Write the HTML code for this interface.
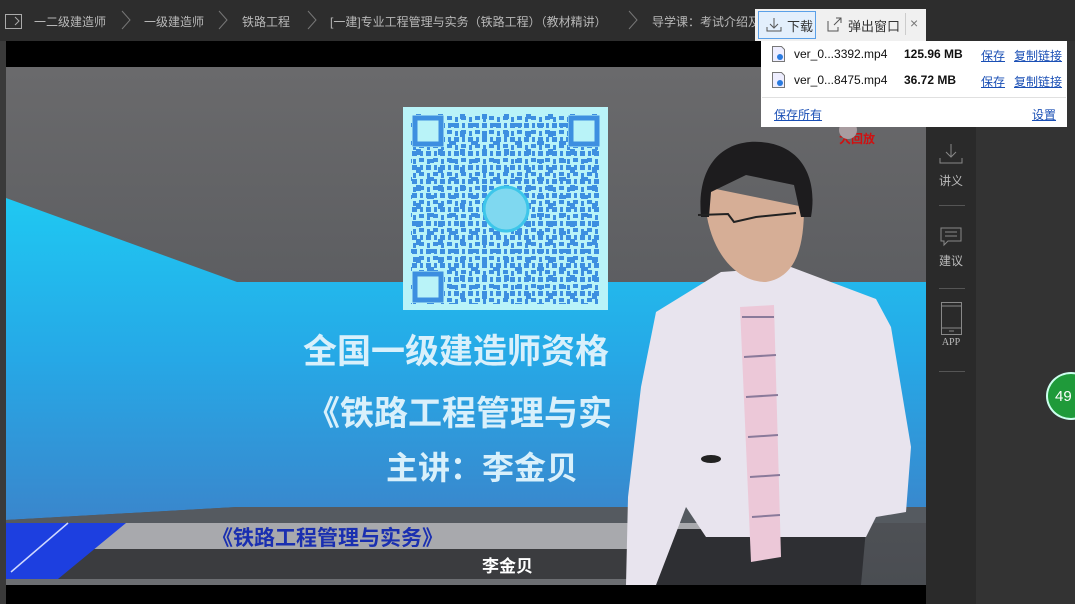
<!DOCTYPE html>
<html><head><meta charset="utf-8"><style>
*{margin:0;padding:0;box-sizing:border-box}
body{width:1075px;height:604px;overflow:hidden;background:#2b2b2b;font-family:"Liberation Sans","Noto Sans CJK SC",sans-serif;position:relative}
.abs{position:absolute}
.bc{position:absolute;top:13px;color:#b8b8b8;font-size:12px;white-space:nowrap}
.chev{position:absolute;top:10px;width:10px;height:20px}
.side{color:#bbb;font-size:12px;text-align:center;width:50px;position:absolute;left:926px}
.hr{position:absolute;left:939px;width:26px;height:1px;background:#555}
a{color:#1a4fb5;text-decoration:underline}
</style></head><body>
<div class="abs" style="left:0;top:0;width:1075px;height:41px;background:#2d2d2d"></div>
<svg class="abs" style="left:5px;top:14px" width="18" height="16"><rect x="0.5" y="0.5" width="16" height="14" fill="none" stroke="#aaa"/><path d="M10 3l4 4-4 4" stroke="#aaa" fill="none"/></svg>
<div class="bc" style="left:34px">一二级建造师</div>
<svg class="chev" style="left:121px"><path d="M1 1l8 9-8 9" stroke="#777" fill="none"/></svg>
<div class="bc" style="left:144px">一级建造师</div>
<svg class="chev" style="left:218px"><path d="M1 1l8 9-8 9" stroke="#777" fill="none"/></svg>
<div class="bc" style="left:242px">铁路工程</div>
<svg class="chev" style="left:307px"><path d="M1 1l8 9-8 9" stroke="#777" fill="none"/></svg>
<div class="bc" style="left:330px">[一建]专业工程管理与实务（铁路工程）（教材精讲）</div>
<svg class="chev" style="left:628px"><path d="M1 1l8 9-8 9" stroke="#777" fill="none"/></svg>
<div class="bc" style="left:652px;width:105px;overflow:hidden">导学课：考试介绍及</div>

<div class="abs" style="left:6px;top:41px;width:920px;height:563px;background:#000"></div>
<div class="abs" style="left:6px;top:67px;width:920px;height:518px;overflow:hidden">
 <svg width="920" height="518" class="abs" style="left:0;top:0">
  <defs>
   <linearGradient id="bg" x1="0" y1="0" x2="0" y2="1"><stop offset="0" stop-color="#6a6a6c"/><stop offset="1" stop-color="#4a4d52"/></linearGradient>
   <linearGradient id="bl" x1="0" y1="0" x2="0" y2="1"><stop offset="0" stop-color="#1fc8f2"/><stop offset="0.5" stop-color="#26a8e6"/><stop offset="1" stop-color="#3a86cc"/></linearGradient>
   <pattern id="qr" width="14" height="14" patternUnits="userSpaceOnUse"><rect width="5" height="5" fill="#3d8fe0"/><rect x="7" y="7" width="5" height="4" fill="#3d8fe0"/><rect x="8" y="0" width="3" height="5" fill="#3d8fe0"/><rect x="1" y="8" width="3" height="5" fill="#3d8fe0"/></pattern>
   <pattern id="qr2" width="22" height="18" patternUnits="userSpaceOnUse"><rect x="3" y="2" width="7" height="4" fill="#3d8fe0"/><rect x="14" y="10" width="5" height="6" fill="#3d8fe0"/></pattern>
  </defs>
  <rect width="920" height="518" fill="url(#bg)"/>
  <polygon points="0,131 231,215 920,215 920,440 231,440 0,453" fill="url(#bl)"/>
  <polygon points="0,453 231,440 920,440 920,456 0,456" fill="#555a60"/>
  <!-- QR -->
  <rect x="397" y="40" width="205" height="203" fill="#b9f3f8"/>
  <rect x="405" y="47" width="190" height="190" fill="url(#qr)"/>
  <rect x="405" y="47" width="190" height="190" fill="url(#qr2)"/>
  <rect x="406" y="48" width="32" height="32" fill="#b9f3f8"/><rect x="562" y="48" width="32" height="32" fill="#b9f3f8"/><rect x="406" y="204" width="32" height="32" fill="#b9f3f8"/>
  <rect x="409" y="51" width="26" height="26" fill="none" stroke="#3d8fe0" stroke-width="5"/>
  <rect x="565" y="51" width="26" height="26" fill="none" stroke="#3d8fe0" stroke-width="5"/>
  <rect x="409" y="207" width="26" height="26" fill="none" stroke="#3d8fe0" stroke-width="5"/>
  <circle cx="500" cy="142" r="22" fill="#7fd8f0" stroke="#3dc6ea" stroke-width="3"/>
  <text x="297" y="296" font-size="34" font-weight="bold" fill="#d9f0fb" font-family="Noto Sans CJK SC">全国一级建造师资格</text>
  <text x="300" y="358" font-size="34" font-weight="bold" fill="#d9f0fb" font-family="Noto Sans CJK SC">《铁路工程管理与实</text>
  <text x="380" y="412" font-size="32" font-weight="bold" fill="#d9f0fb" font-family="Noto Sans CJK SC">主讲：李金贝</text>
  <!-- lower third -->
  <rect x="0" y="456" width="720" height="26" fill="#a8a9ad"/>
  <rect x="0" y="482" width="720" height="30" fill="#3b3c3f"/>
  <rect x="0" y="512" width="720" height="6" fill="#6c6e72"/>
  <polygon points="0,456 120,456 52,512 0,512" fill="#1d3fe0"/>
  <line x1="62" y1="456" x2="5" y2="505" stroke="#cfd8ff" stroke-width="1.5"/>
  <text x="206" y="478" font-size="21" font-weight="bold" fill="#1a2fb0" font-family="Noto Sans CJK SC">《铁路工程管理与实务》</text>
  <text x="476" y="505" font-size="17" font-weight="bold" fill="#fff" font-family="Noto Sans CJK SC">李金贝</text>
  <!-- person -->
  <path d="M640 462 L860 462 L855 518 L645 518 Z" fill="#2e2f33"/>
  <path d="M715 205 L785 200 L870 232 L885 260 L905 380 L900 445 L870 450 L860 470 L700 470 L680 440 L650 518 L620 518 L622 430 L635 320 L650 245 Z" fill="#e8e4ee"/>
  <path d="M734 240 L768 238 L775 490 L745 495 Z" fill="#ecc8d8"/>
  <path d="M736 250 L768 250 M738 290 L770 288 M740 330 L772 328 M742 370 L772 368 M744 410 L774 408 M746 450 L774 448" stroke="#8a7a9a" stroke-width="2"/>
  <path d="M700 143 C 705 185 730 215 760 215 C 790 210 798 180 798 140 L700 120 Z" fill="#d6ae96"/>
  <path d="M695 150 C 690 95 720 72 755 75 C 795 78 812 110 805 150 L795 150 L788 118 L740 108 L705 125 L703 150 Z" fill="#1d1c1e"/>
  <path d="M692 148 L722 147 L728 155 L750 150 L790 146" stroke="#222" stroke-width="2" fill="none"/>
  <ellipse cx="705" cy="392" rx="10" ry="4" fill="#222"/>
  <text x="833" y="76" font-size="12" font-weight="bold" fill="#d01010">大回放</text>
  <circle cx="842" cy="63" r="9" fill="#a89ca0"/>
 </svg>
</div>
<div class="abs" style="left:0;top:41px;width:6px;height:563px;background:#3a3a3a"></div>

<div class="abs" style="left:926px;top:41px;width:50px;height:563px;background:#2a2a2a"></div>
<div class="abs" style="left:976px;top:41px;width:99px;height:563px;background:#333"></div>
<svg class="abs" style="left:939px;top:143px" width="24" height="22"><path d="M12 1v13M7 9l5 5 5-5M1 15v5h22v-5" stroke="#888" fill="none"/></svg>
<div class="side" style="top:172px">讲义</div>
<div class="hr" style="top:205px"></div>
<svg class="abs" style="left:940px;top:227px" width="22" height="20"><path d="M1 1h20v13H8l-4 4v-4H1z" stroke="#888" fill="none"/><path d="M5 5h12M5 9h12" stroke="#888"/></svg>
<div class="side" style="top:252px">建议</div>
<div class="hr" style="top:288px"></div>
<svg class="abs" style="left:941px;top:302px" width="21" height="33"><rect x="0.5" y="0.5" width="20" height="32" fill="none" stroke="#888"/><path d="M1 4h19M1 26h19M8 29h5" stroke="#888"/></svg>
<div class="side" style="top:337px;font-size:10px;font-family:'Liberation Serif',serif">APP</div>
<div class="hr" style="top:371px"></div>
<div class="abs" style="left:1046px;top:372px;width:50px;height:48px;border-radius:50%;background:#1f9a3a;border:2px solid #cfe;color:#fff;font-size:15px;padding:14px 0 0 7px">49</div>

<div class="abs" style="left:755px;top:9px;width:171px;height:32px;background:#f0f0f0"></div>
<div class="abs" style="left:758px;top:11px;width:58px;height:28px;background:#e3effc;border:1px solid #5aa0e8"></div>
<svg class="abs" style="left:766px;top:17px" width="16" height="15"><path d="M8 1v9M4 7l4 4 4-4M1 10v4h14v-4" stroke="#555" fill="none"/></svg>
<div class="abs" style="left:787px;top:16px;font-size:13px;color:#333">下载</div>
<svg class="abs" style="left:827px;top:17px" width="15" height="15"><path d="M1 4v10h10V10M7 8l7-7M9 1h5v5" stroke="#555" fill="none"/></svg>
<div class="abs" style="left:848px;top:16px;font-size:13px;color:#333">弹出窗口</div>
<div class="abs" style="left:905px;top:13px;width:1px;height:22px;background:#ccc"></div>
<div class="abs" style="left:910px;top:15px;font-size:14px;color:#777">×</div>
<div class="abs" style="left:761px;top:41px;width:306px;height:86px;background:#fff;font-size:12px;color:#111">
 <svg class="abs" style="left:11px;top:5px" width="13" height="16"><path d="M0.5 0.5h9l3 3v12H0.5z" fill="#eef" stroke="#777"/><circle cx="8" cy="11" r="3" fill="#2a7be0"/></svg>
 <div class="abs" style="left:33px;top:6px">ver_0...3392.mp4</div>
 <div class="abs" style="left:143px;top:6px;font-weight:bold">125.96 MB</div>
 <a class="abs" style="left:220px;top:6px">保存</a><a class="abs" style="left:253px;top:6px">复制链接</a>
 <svg class="abs" style="left:11px;top:31px" width="13" height="16"><path d="M0.5 0.5h9l3 3v12H0.5z" fill="#eef" stroke="#777"/><circle cx="8" cy="11" r="3" fill="#2a7be0"/></svg>
 <div class="abs" style="left:33px;top:32px">ver_0...8475.mp4</div>
 <div class="abs" style="left:143px;top:32px;font-weight:bold">36.72 MB</div>
 <a class="abs" style="left:220px;top:32px">保存</a><a class="abs" style="left:253px;top:32px">复制链接</a>
 <div class="abs" style="left:1px;top:56px;width:304px;height:1px;background:#e0e0e0"></div>
 <a class="abs" style="left:13px;top:65px">保存所有</a><a class="abs" style="left:271px;top:65px">设置</a>
</div>
</body></html>
